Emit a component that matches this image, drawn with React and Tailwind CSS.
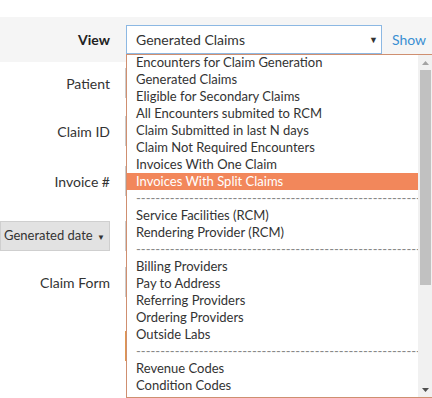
import React from "react";

const groups = [
  [
    "Encounters for Claim Generation",
    "Generated Claims",
    "Eligible for Secondary Claims",
    "All Encounters submited to RCM",
    "Claim Submitted in last N days",
    "Claim Not Required Encounters",
    "Invoices With One Claim",
    "Invoices With Split Claims",
  ],
  ["Service Facilities (RCM)", "Rendering Provider (RCM)"],
  ["Billing Providers", "Pay to Address", "Referring Providers", "Ordering Providers", "Outside Labs"],
  ["Revenue Codes", "Condition Codes"],
];

const dashes = "-".repeat(61);

const FormRow = ({ label, top, children }) => (
  <div className={`flex items-center h-[30px] ${top}`}>
    <div className="w-[110px] shrink-0 text-right text-[14px] text-[#333]">{label}</div>
    <div className="ml-[15px]">{children}</div>
  </div>
);

const Input = ({ color = "border-[#ccc]" }) => (
  <div className={`w-[250px] h-[30px] border ${color} bg-white`} />
);

const DropdownList = () => {
  const selected = "Invoices With Split Claims";
  return (
    <div className="absolute left-[126px] top-[54px] w-[308px] h-[344px] border border-[#cf8f70] bg-white flex">
      <div className="w-[291px] -mt-[1px]">
        {groups.map((group, gi) => (
          <div key={gi}>
            {gi > 0 && (
              <div className="h-[17px] leading-[17px] pl-[9px] whitespace-nowrap text-[13px] text-[#888]">
                {dashes}
              </div>
            )}
            {group.map((item) => (
              <div
                key={item}
                className={`h-[17px] leading-[17px] pl-[9px] text-[13px] whitespace-nowrap ${
                  item === selected ? "bg-[#f2875b] text-white" : "text-[#333]"
                }`}
              >
                {item}
              </div>
            ))}
          </div>
        ))}
      </div>
      <div className="w-[15px] bg-[#f1f1f1] flex flex-col items-center">
        <div className="h-[15px] flex items-center justify-center">
          <svg width="7" height="4" viewBox="0 0 7 4">
            <path d="M0 4 L3.5 0 L7 4 Z" fill="#a3a3a3" />
          </svg>
        </div>
        <div className="w-[11px] h-[215px] bg-[#c1c1c1]" />
        <div className="flex-1" />
        <div className="h-[15px] flex items-center justify-center">
          <svg width="7" height="4" viewBox="0 0 7 4">
            <path d="M0 0 L7 0 L3.5 4 Z" fill="#505050" />
          </svg>
        </div>
      </div>
    </div>
  );
};

const App = () => {
  return (
    <div className="relative w-[432px] h-[398px] overflow-hidden bg-white font-['Lato',sans-serif] text-[#333]">
      <div className="h-[17px]" />
      <div className="flex items-center h-[45px] bg-[#f5f5f5]">
        <div className="w-[110px] shrink-0 text-right text-[14px] font-bold text-[#222]">View</div>
        <div className="ml-[16px] w-[256px] h-[29px] border border-[#8cb8e3] bg-white flex items-center pl-[9px] pr-[3px] text-[14px] text-[#333]">
          Generated Claims
          <span className="ml-auto text-[9px] text-[#333]">▼</span>
        </div>
        <a className="ml-[10px] text-[14px] text-[#3a8fd2]">Show</a>
      </div>

      <FormRow label="Patient" top="mt-[6px]">
        <Input />
      </FormRow>
      <FormRow label="Claim ID" top="mt-[18px]">
        <Input />
      </FormRow>
      <FormRow label="Invoice #" top="mt-[20px]">
        <Input />
      </FormRow>
      <div className="flex items-center h-[30px] mt-[25px]">
        <button className="w-[110px] h-[30px] shrink-0 bg-[#e2e2e2] border border-[#cfcfcf] text-left pl-[3px] text-[13px] text-[#333] whitespace-nowrap">
          Generated date <span className="text-[8px] ml-[1px] align-middle">▼</span>
        </button>
        <div className="ml-[15px]">
          <Input />
        </div>
      </div>
      <FormRow label="Claim Form" top="mt-[16px]">
        <Input />
      </FormRow>
      <div className="flex h-[30px] mt-[34px]">
        <div className="ml-[125px] w-[120px] h-[30px] border border-[#e0974f] bg-[#f3a35c]" />
      </div>

      <DropdownList />
    </div>
  );
};

export default App;
